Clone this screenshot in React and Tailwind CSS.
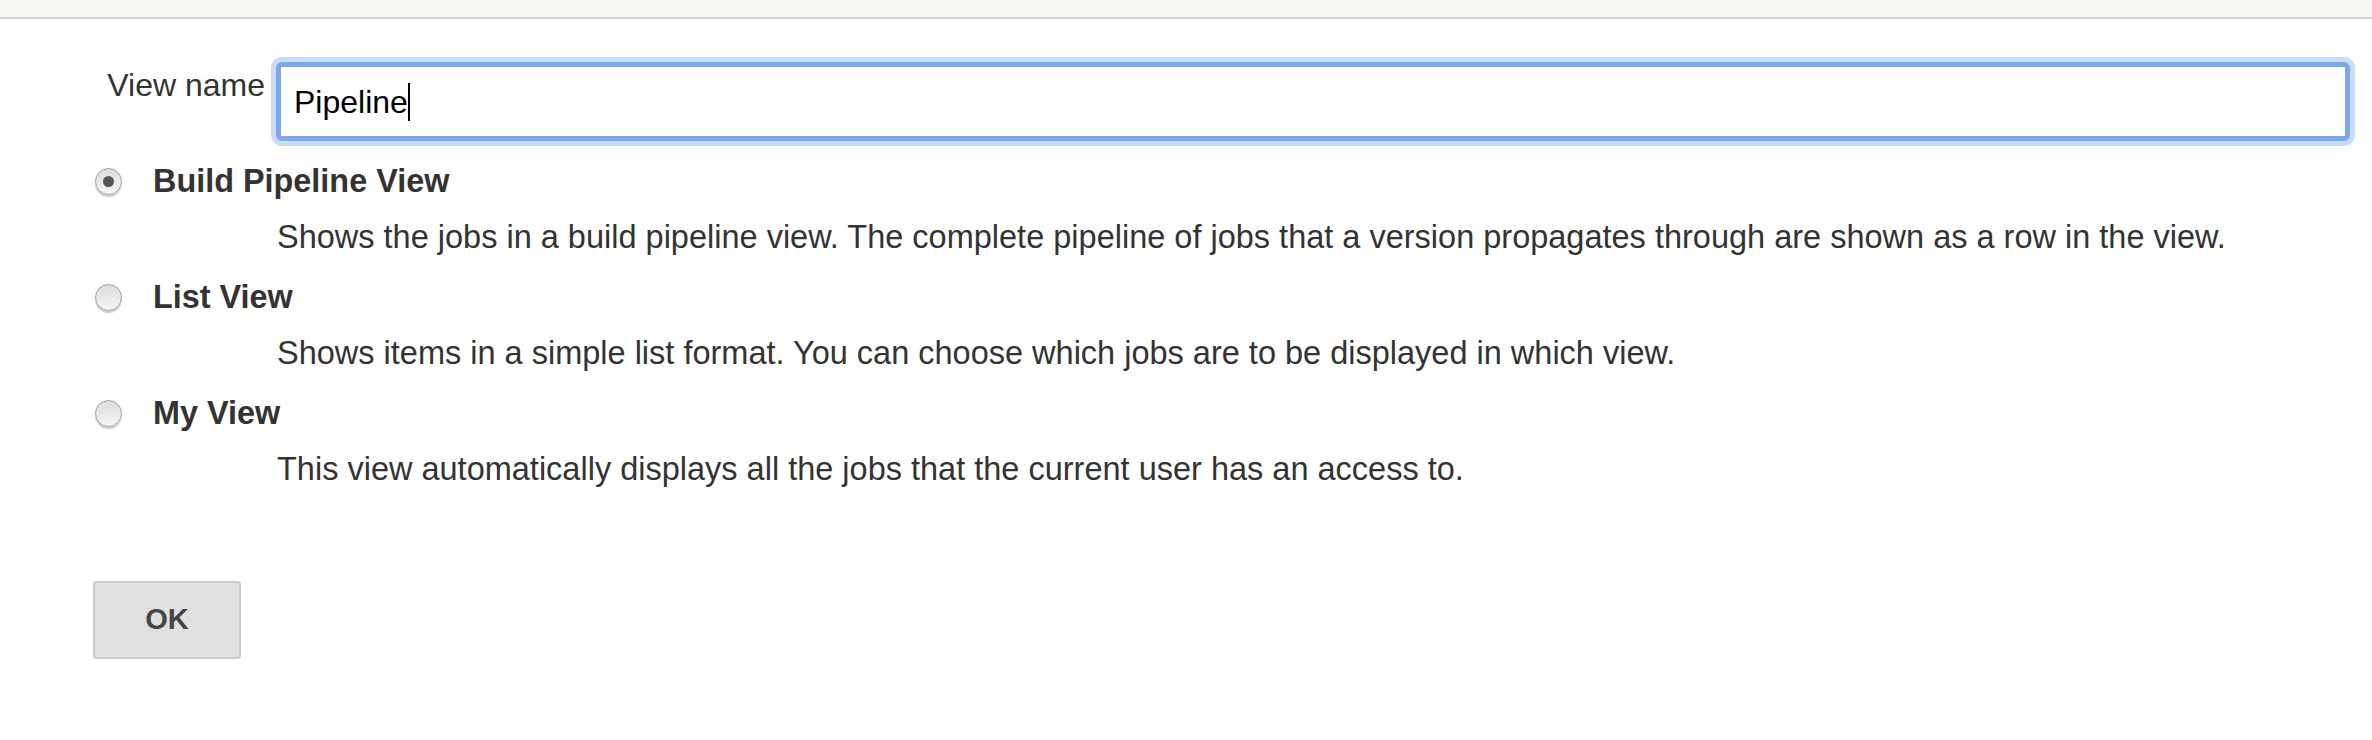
import React from "react";

const options = [
  {
    id: "build",
    title: "Build Pipeline View",
    desc: "Shows the jobs in a build pipeline view. The complete pipeline of jobs that a version propagates through are shown as a row in the view.",
    checked: true,
  },
  {
    id: "list",
    title: "List View",
    desc: "Shows items in a simple list format. You can choose which jobs are to be displayed in which view.",
  },
  {
    id: "my",
    title: "My View",
    desc: "This view automatically displays all the jobs that the current user has an access to.",
  },
];

const Radio = ({ checked }) => (
  <div className="w-[27px] h-[27px] rounded-full border border-[#9e9e9e] bg-gradient-to-b from-[#dcdcdc] to-[#f6f6f6] shadow-[0_2px_1px_rgba(0,0,0,0.2)] flex items-center justify-center shrink-0">
    {checked && <div className="w-[11px] h-[11px] rounded-full bg-[#555]" />}
  </div>
);

export default function App() {
  return (
    <div className="min-h-screen bg-white text-[#333] font-['Liberation_Sans',Arial,sans-serif]">
      {/* top strip */}
      <div className="h-[19px] bg-[#f5f7f0] border-b-2 border-[#d4d6cf]" />

      <div className="pl-[93px] pr-[22px]">
        {/* View name */}
        <div className="flex items-start mt-[43px]">
          <label className="w-[183px] pr-[11px] pt-[3px] text-right text-[32px] leading-[40px] shrink-0">
            View name
          </label>
          <div className="flex-1 h-[79px] border-[5px] border-[#7fa8e8] rounded-[6px] shadow-[0_0_0_5px_#c8ddf9] bg-white flex items-center pl-[13px]">
            <span className="text-[32px] leading-[40px] text-black">Pipeline</span>
            <span className="w-[2px] h-[38px] bg-black" />
          </div>
        </div>

        {/* view types */}
        <div className="mt-[20px] flex flex-col gap-[20px]">
          {options.map((o) => (
            <div key={o.id}>
              <div className="flex items-center h-[40px] pl-[2px]">
                <Radio checked={o.checked} />
                <span className="ml-[31px] text-[32.4px] leading-[40px] font-bold">{o.title}</span>
              </div>
              <div className="mt-[16px] ml-[184px] text-[32.5px] leading-[40px] whitespace-nowrap">
                {o.desc}
              </div>
            </div>
          ))}
        </div>

        <button className="mt-[92px] w-[148px] h-[78px] bg-[#e0e0e0] border-2 border-[#cbcbcb] rounded-[3px] text-[29px] font-bold text-[#454545]">
          OK
        </button>
      </div>
    </div>
  );
}
